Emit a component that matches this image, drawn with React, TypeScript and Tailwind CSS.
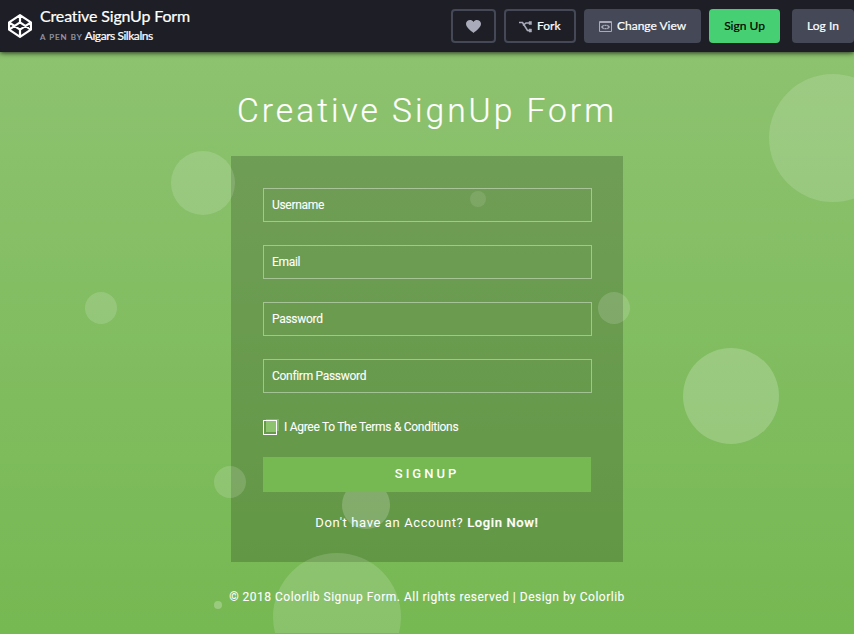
import React from "react";

const bubbles = [
  "left-[171px] top-[99px] size-16 bg-white/15",
  "left-[769px] top-[22px] size-32 bg-white/15",
  "left-[85px] top-[240px] size-8 bg-white/15",
  "left-[470px] top-[139px] size-4 bg-white/10",
  "left-[598px] top-[240px] size-8 bg-white/15",
  "left-[683px] top-[296px] size-24 bg-white/20",
  "left-[214px] top-[414px] size-8 bg-white/15",
  "left-[342px] top-[429px] size-12 bg-white/20",
  "left-[273px] top-[501px] size-32 bg-white/15",
  "left-[214px] top-[549px] size-2 bg-white/25",
];

const fields = [
  { label: "Username", type: "text" },
  { label: "Email", type: "email" },
  { label: "Password", type: "password" },
  { label: "Confirm Password", type: "password" },
];

function Header() {
  return (
    <header className="relative z-20 flex h-[52px] items-start bg-[#1e1f26] pl-2 font-['Lato',sans-serif] text-white shadow-[0_1px_5px_rgba(0,0,0,0.75)]">
      <svg className="mt-[14px] size-6 shrink-0" viewBox="0 0 24 24" fill="none" stroke="white" strokeWidth="2.2" strokeLinejoin="round">
        <path d="M12 1.2 22.9 8.3V15.7L12 22.8 1.1 15.7V8.3Z M12 1.2V8.3 M12 15.7V22.8 M1.1 8.3 12 15.7 22.9 8.3 M1.1 15.7 12 8.3 22.9 15.7" />
      </svg>
      <div className="ml-2 mt-[6px] w-[411px] shrink-0 whitespace-nowrap">
        <h2 className="text-[16px] leading-[20px] tracking-[-0.15px] [-webkit-text-stroke:0.2px]">Creative SignUp Form</h2>
        <p className="mt-[3px] flex items-baseline text-[12px] leading-[14px]">
          <span className="mr-[2px] text-[8px] tracking-[1px] text-[#9b9dad] [-webkit-text-stroke:0.2px]">A PEN BY</span>
          <span className="tracking-[-0.45px] [-webkit-text-stroke:0.2px]">Aigars Silkalns</span>
        </p>
      </div>
      <div className="mt-[9px] flex shrink-0 text-[12px] leading-[30px] whitespace-nowrap [-webkit-text-stroke:0.2px]">
        <button className="flex h-[34px] w-[45px] items-center justify-center rounded border-2 border-[#444857]">
          <svg className="size-[15px]" viewBox="0 0 16 14" fill="#a9abbb">
            <path d="M8 14C5.5 11.5 0 8.4 0 4.1 0 .3 5.6-1.7 8 2.2 10.4-1.7 16 .3 16 4.1 16 8.4 10.5 11.5 8 14Z" />
          </svg>
        </button>
        <button className="ml-2 flex h-[34px] w-[72px] items-center rounded border-2 border-[#444857] pl-[13px]">
          <svg className="mr-[5px] size-[13px]" viewBox="0 0 13 13" fill="none" stroke="#a9abbb" strokeWidth="1.6">
            <path d="M0 2.5H3.5L8.5 10.5H11 M4 5.5 7 3H11" />
            <path d="M10 1.5H12.5V4.5H10Z M10 9H12.5V12H10Z" fill="#a9abbb" strokeWidth=".5" />
          </svg>
          <span>Fork</span>
        </button>
        <button className="ml-2 flex h-[34px] w-[117px] items-center rounded bg-[#444857] pl-[15px]">
          <svg className="mr-[5px] mt-px h-[11px] w-[13px]" viewBox="0 0 13 11" fill="none" stroke="#a9abbb">
            <path d="M.5.5H12.5V10.5H.5Z M0 1.5H13" />
            <path d="M4.7 4.2 2.8 6 4.7 7.8 M8.3 4.2 10.2 6 8.3 7.8 M5.4 4.3H7.6 M5.4 7.7H7.6" strokeWidth="1.3" />
          </svg>
          <span>Change View</span>
        </button>
        <button className="ml-2 h-[34px] w-[71px] rounded bg-[#47cf73] text-black">Sign Up</button>
        <button className="ml-3 h-[34px] w-[62px] rounded bg-[#444857]">Log In</button>
      </div>
    </header>
  );
}

export default function App() {
  return (
    <div className="h-[634px] w-[854px] overflow-hidden font-['Roboto',sans-serif] text-white">
      <Header />
      <main className="relative h-[582px] overflow-hidden bg-linear-to-b from-[#8dc26f] to-[#76b852]">
        <div className="absolute inset-x-0 top-0 z-[1] h-[581px] overflow-hidden">
          {bubbles.map((b) => (
            <span key={b} className={"absolute rounded-full " + b} />
          ))}
        </div>
        <h1 className="pt-[37px] text-center text-[33.6px] leading-[44px] font-light tracking-[3px] [-webkit-text-stroke:0.2px]">Creative SignUp Form</h1>
        <form className="mx-auto mt-[23px] h-[406px] w-[392px] bg-[#0a1405]/20 px-8 pt-8">
          <div className="flex flex-col gap-[23px]">
            {fields.map((f) => (
              <input
                key={f.label}
                type={f.type}
                placeholder={f.label}
                className="relative z-[2] block h-[34px] w-[329px] border border-white/40 bg-transparent px-2 pb-px text-[12px] tracking-[-0.3px] outline-none [-webkit-text-stroke:0.1px] placeholder:text-white"
              />
            ))}
          </div>
          <label className="relative z-[2] mt-[25px] flex h-[17px] items-center text-[12px] tracking-[-0.29px] [-webkit-text-stroke:0.1px]">
            <span className="relative mt-[2px] mr-[7px] h-[15px] w-[14px] border border-white">
              <span className="absolute top-[-2px] left-[2px] h-[12px] w-[13px] bg-[#8dc26f]/70" />
              <span className="absolute top-0 left-[2px] h-[11px] w-[10px] bg-[#8dc26f]" />
              <span className="absolute -inset-px border border-white" />
            </span>
            I Agree To The Terms &amp; Conditions
          </label>
          <button type="button" className="relative z-[2] mt-[22px] block h-[35px] w-[328px] bg-[#76b852] pb-px text-[13px] font-medium tracking-[3px]">SIGNUP</button>
          <p className="relative z-[2] mt-[21px] text-center text-[13px] leading-[20px] tracking-[0.62px]">
            Don't have an Account? <a className="font-medium [-webkit-text-stroke:0.2px]">Login Now!</a>
          </p>
        </form>
        <footer className="relative z-[2] mt-[25px] text-center text-[12px] leading-[20px] tracking-[0.5px] [-webkit-text-stroke:0.1px]">
          © 2018 Colorlib Signup Form. All rights reserved | Design by Colorlib
        </footer>
      </main>
    </div>
  );
}
